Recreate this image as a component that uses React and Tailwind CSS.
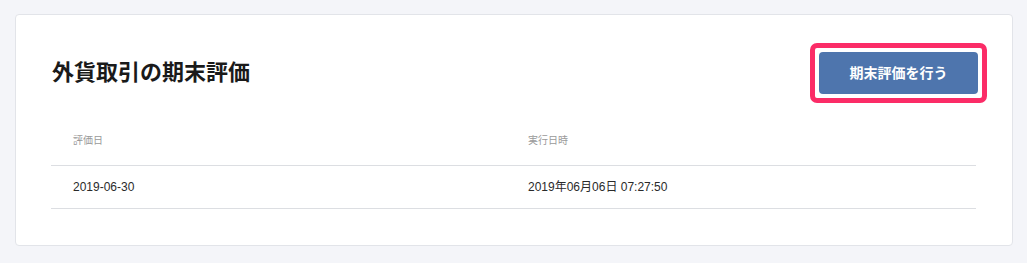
export default function App() {
  const rows = [{ date: "2019-06-30", executedAt: "2019年06月06日 07:27:50" }];

  return (
    <div
      className="min-h-[263px] bg-[#f4f5f9] pt-[14px] pl-[15px] pr-[14px] pb-[17px]"
      style={{ fontFamily: '"Liberation Sans", "Noto Sans CJK JP", sans-serif' }}
    >
      <div className="rounded-[4px] border border-[#e2e4e9] bg-white pt-[28px] pr-[36px] pb-[36px] pl-[35px]">
        {/* Header */}
        <div className="flex items-center justify-between mr-[-11px]">
          <h1 className="ml-[1px] text-[22px] font-bold leading-none text-[#1a1a1a]">外貨取引の期末評価</h1>
          <div className="rounded-[7px] border-[5px] border-[#fb2c67] p-[4px]">
            <button className="h-[42px] w-[159px] rounded-[4px] bg-[#4e75ad] text-[14px] font-bold text-white">
              期末評価を行う
            </button>
          </div>
        </div>

        {/* Table */}
        <table className="mt-[13px] w-full border-collapse text-left">
          <thead>
            <tr className="border-b border-[#dcdee2]">
              <th className="h-[49px] w-[455px] pl-[22px] pt-[1px] text-[10px] font-normal text-[#9a9a9a]">評価日</th>
              <th className="h-[49px] pl-[22px] pt-[1px] text-[10px] font-normal text-[#9a9a9a]">実行日時</th>
            </tr>
          </thead>
          <tbody>
            {rows.map((row) => (
              <tr key={row.date} className="border-b border-[#dcdee2]">
                <td className="h-[43px] pl-[22px] text-[12px] text-[#2a2a2a]">{row.date}</td>
                <td className="h-[43px] pl-[22px] text-[12px] text-[#2a2a2a]">{row.executedAt}</td>
              </tr>
            ))}
          </tbody>
        </table>
      </div>
    </div>
  );
}
